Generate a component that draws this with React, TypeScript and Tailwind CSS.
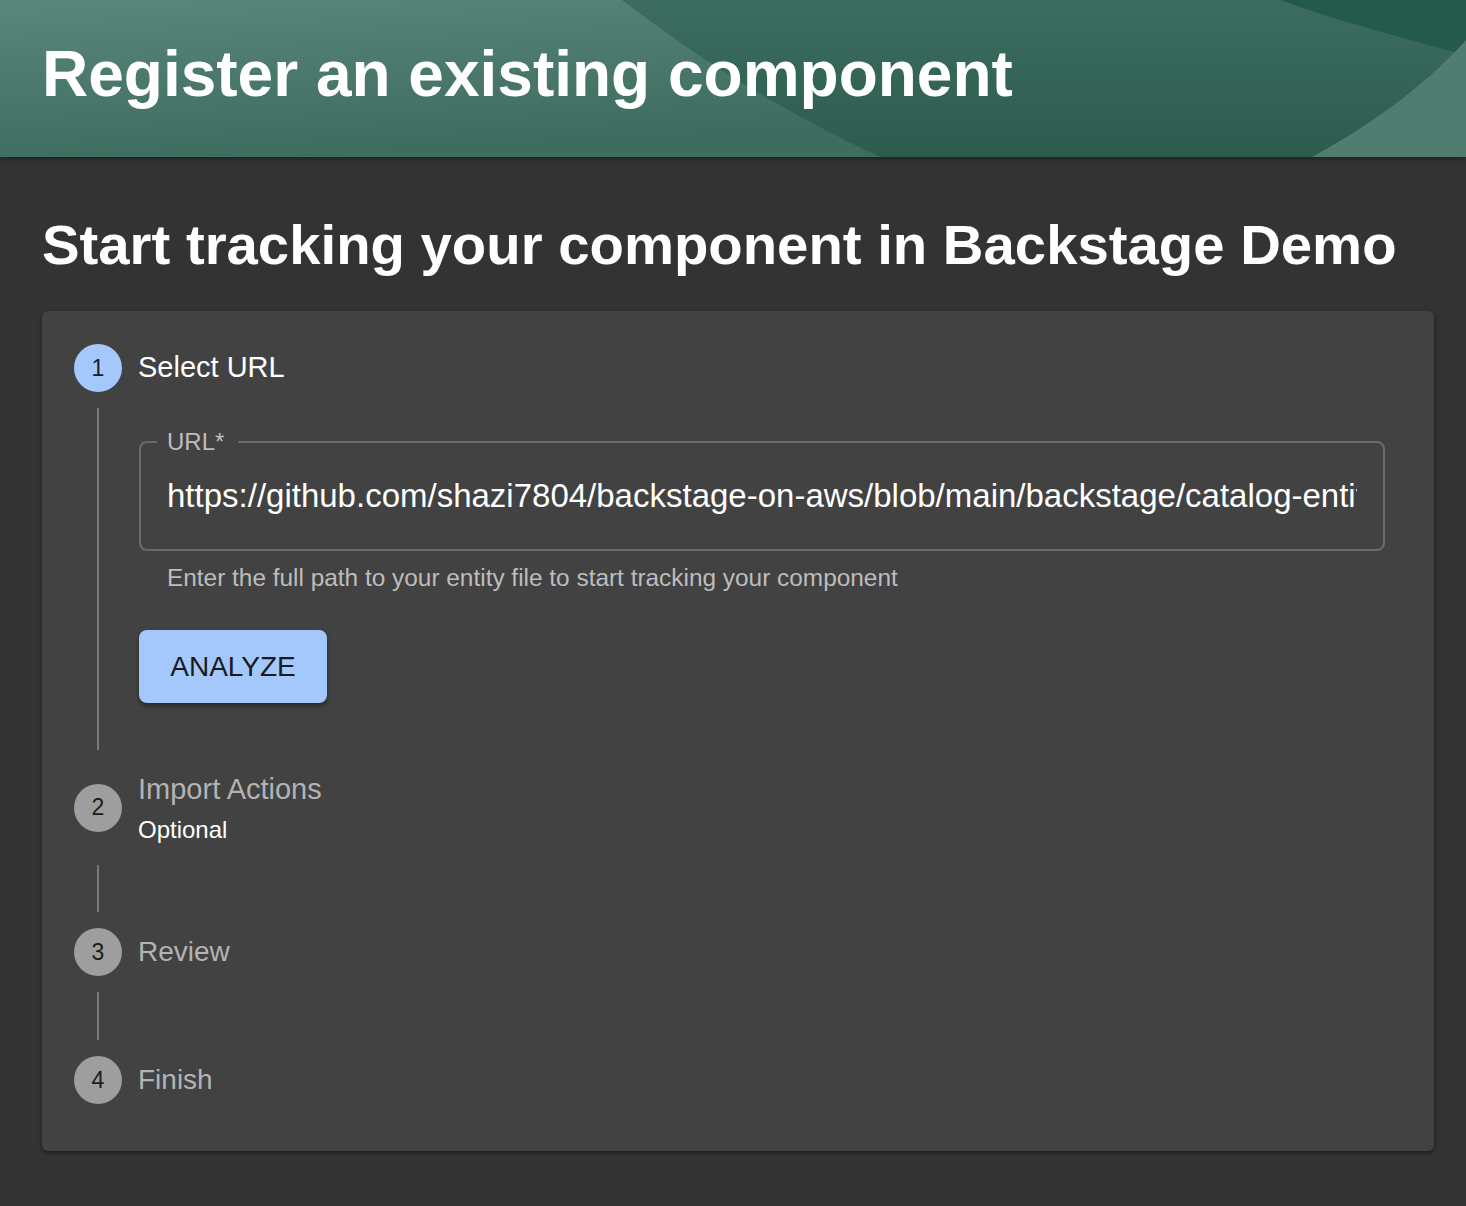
import { ReactNode } from "react";

const font = { fontFamily: '"Liberation Sans", Arial, sans-serif' };

function HeaderArt() {
  return (
    <svg className="absolute inset-0 h-full w-full" viewBox="0 0 1466 157" preserveAspectRatio="none">
      <defs>
        <linearGradient id="mid" x1="0" y1="0" x2="0" y2="1">
          <stop offset="0" stopColor="#3c6d5f" />
          <stop offset="1" stopColor="#2d5c4f" />
        </linearGradient>
        <linearGradient id="left" x1="0" y1="0" x2="0.3" y2="1">
          <stop offset="0" stopColor="#5a867b" />
          <stop offset="1" stopColor="#3e6c5f" />
        </linearGradient>
      </defs>
      <rect width="1466" height="157" fill="url(#mid)" />
      <path d="M0 0 L622 0 C700 60 780 110 880 157 L0 157 Z" fill="url(#left)" />
      <path d="M1280 0 L1466 0 L1466 55 C1390 35 1330 18 1280 0 Z" fill="#245a4a" />
      <path d="M1466 40 L1466 157 L1312 157 C1380 120 1430 80 1466 40 Z" fill="#517d71" />
    </svg>
  );
}

function Circle({ n, active }: { n: number; active?: boolean }) {
  return (
    <div
      className={
        "flex h-12 w-12 shrink-0 items-center justify-center rounded-full text-[23px] text-[#1c1c1c] " +
        (active ? "bg-[#a4c8fb]" : "bg-[#9e9e9e]")
      }
    >
      {n}
    </div>
  );
}

function Line({ h, children }: { h?: string; children?: ReactNode }) {
  return (
    <div className={"my-4 ml-[23px] border-l-2 border-[#7a7a7a] " + (h || "")}>{children}</div>
  );
}

export default function App() {
  return (
    <div className="min-h-[1206px] bg-[#333333] text-white" style={font}>
      <header className="relative h-[157px] overflow-hidden shadow-[0_2px_6px_rgba(0,0,0,0.4)]">
        <HeaderArt />
        <h1 className="relative pl-[42px] pt-[36px] text-[64px] font-bold leading-[76px]">
          Register an existing component
        </h1>
      </header>

      <main className="pl-[42px] pr-[32px] pt-[48px]">
        <h2 className="text-[56.3px] font-bold leading-[80px]">Start tracking your component in Backstage Demo</h2>

        <div className="mt-[26px] rounded-md bg-[#424242] px-8 pb-[47px] pt-[33px] shadow-[0_2px_4px_rgba(0,0,0,0.45)]">
          <div className="flex items-center gap-4">
            <Circle n={1} active />
            <span className="text-[29px]">Select URL</span>
          </div>

          <Line>
            <div className="pl-[40px] pr-[17px] pt-[33px] pb-[47px]">
              <div className="relative flex h-[110px] items-center rounded-lg border-2 border-[#6b6b6b] px-[26px]">
                <span className="absolute -top-[15px] left-[16px] bg-[#424242] pl-[10px] pr-[14px] text-[24px] leading-[28px] text-[#bdbdbd]">
                  URL*
                </span>
                <input
                  readOnly
                  value="https://github.com/shazi7804/backstage-on-aws/blob/main/backstage/catalog-entities/all.yaml"
                  className="w-full bg-transparent text-[33px] text-white outline-none"
                  style={font}
                />
              </div>
              <p className="mt-[13px] pl-7 text-[24.4px] leading-[28px] text-[#bdbdbd]">
                Enter the full path to your entity file to start tracking your component
              </p>
              <button className="mt-[38px] h-[73px] w-[188px] rounded-lg bg-[#a4c8fb] text-[28px] text-[#1a1a1a] shadow-[0_3px_4px_rgba(0,0,0,0.4)]">
                ANALYZE
              </button>
            </div>
          </Line>

          <div className="flex h-[83px] items-center gap-4">
            <Circle n={2} />
            <div className="flex flex-col">
              <span className="text-[29px] leading-[36px] text-[#b3b3b3]">Import Actions</span>
              <span className="mt-[8px] text-[24px] leading-[30px]">Optional</span>
            </div>
          </div>

          <Line h="h-[47px]" />

          <div className="flex items-center gap-4">
            <Circle n={3} />
            <span className="text-[28px] text-[#b3b3b3]">Review</span>
          </div>

          <Line h="h-[48px]" />

          <div className="flex items-center gap-4">
            <Circle n={4} />
            <span className="text-[28px] text-[#b3b3b3]">Finish</span>
          </div>
        </div>
      </main>
    </div>
  );
}
